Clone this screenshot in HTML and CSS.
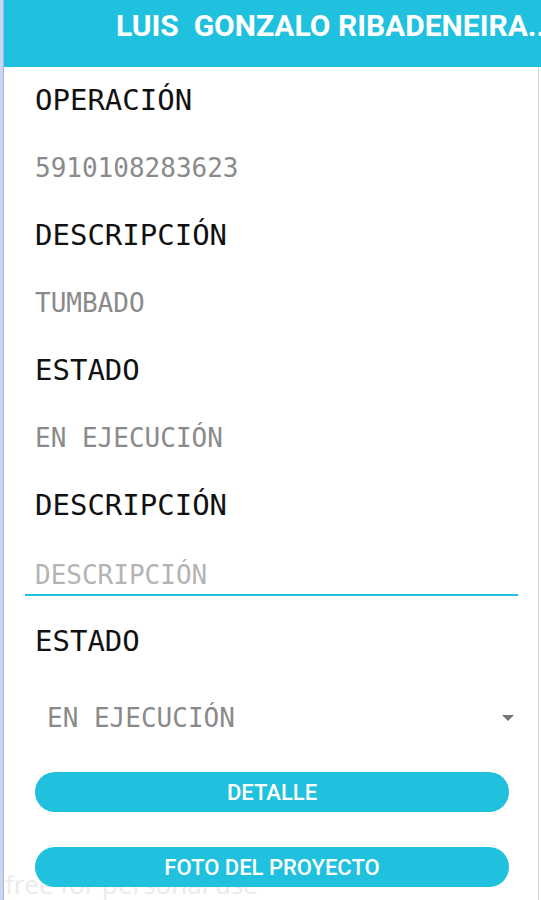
FILE: index.html
```html
<!DOCTYPE html>
<html>
<head>
<meta charset="utf-8">
<link rel="stylesheet" href="styles.css">
</head>
<body>
<div class="screen">
  <div class="edge"></div>
  <div class="main">
    <header class="topbar"><span class="title">LUIS  GONZALO RIBADENEIRA...</span></header>
    <div class="content">
      <div class="label">OPERACIÓN</div>
      <div class="value">5910108283623</div>
      <div class="label">DESCRIPCIÓN</div>
      <div class="value">TUMBADO</div>
      <div class="label">ESTADO</div>
      <div class="value">EN EJECUCIÓN</div>
      <div class="label">DESCRIPCIÓN</div>
      <div class="input"><span class="placeholder">DESCRIPCIÓN</span></div>
      <div class="label label-gap">ESTADO</div>
      <div class="spinner">
        <span class="spinner-text">EN EJECUCIÓN</span>
        <svg class="arrow" width="12" height="6" viewBox="0 0 12 6"><path d="M0 0 L12 0 L6 6 Z" fill="#757575"/></svg>
      </div>
      <div class="buttons">
        <button class="btn">DETALLE</button>
        <button class="btn">FOTO DEL PROYECTO</button>
      </div>
    </div>
    <div class="watermark">free for personal use</div>
  </div>
</div>
</body>
</html>
```
FILE: styles.css
```css
html, body {
  margin: 0;
  padding: 0;
  background: #ffffff;
}
.screen {
  width: 541px;
  height: 900px;
  display: flex;
  overflow: hidden;
}
.edge {
  width: 3px;
  flex: none;
  background: #c8d6ef;
  border-right: 1px solid #9fb6e2;
}
.main {
  flex: 1;
  min-width: 0;
  position: relative;
  display: flex;
  flex-direction: column;
  border-right: 1px solid #d4d4d4;
  margin-right: 2px;
}
.topbar {
  height: 67px;
  background: #1fc1de;
  margin-right: -3px;
  overflow: hidden;
  min-width: 0;
}
.title {
  display: block;
  padding-left: 112px;
  font-family: Roboto, "Liberation Sans", sans-serif;
  font-weight: 700;
  font-size: 30px;
  line-height: 52px;
  color: #ffffff;
  white-space: pre;
  overflow: hidden;
}
.content {
  display: flex;
  flex-direction: column;
  padding-left: 31px;
}
.label {
  font-family: "DejaVu Sans Mono", monospace;
  font-size: 29px;
  line-height: 67px;
  height: 67px;
  color: #111111;
}
.label-gap {
  margin-top: 12px;
}
.value {
  font-family: "DejaVu Sans Mono", monospace;
  font-size: 26px;
  line-height: 68px;
  height: 68px;
  color: #8a8a8a;
}
.input {
  margin-left: -10px;
  margin-right: 20px;
  padding: 21px 0 4px 10px;
  border-bottom: 2px solid #1fc1de;
  font-family: "DejaVu Sans Mono", monospace;
  font-size: 26px;
  line-height: 30px;
  color: #b4b4b4;
}
.spinner {
  display: flex;
  align-items: center;
  justify-content: space-between;
  height: 86px;
  padding-left: 12px;
  padding-right: 24px;
  font-family: "DejaVu Sans Mono", monospace;
  font-size: 26px;
  color: #8a8a8a;
}
.arrow {
  display: block;
}
.buttons {
  display: flex;
  flex-direction: column;
  gap: 35px;
  margin-top: 11px;
  margin-right: 29px;
  position: relative;
  z-index: 1;
}
.btn {
  height: 40px;
  border: none;
  border-radius: 20px;
  background: #1fc1de;
  color: #ffffff;
  font-family: Roboto, "Liberation Sans", sans-serif;
  font-weight: 500;
  font-size: 22px;
  padding: 0;
}
.watermark {
  position: absolute;
  left: 1px;
  top: 866px;
  font-family: "Open Sans", sans-serif;
  font-size: 26px;
  color: #ebebeb;
  white-space: nowrap;
}
```
